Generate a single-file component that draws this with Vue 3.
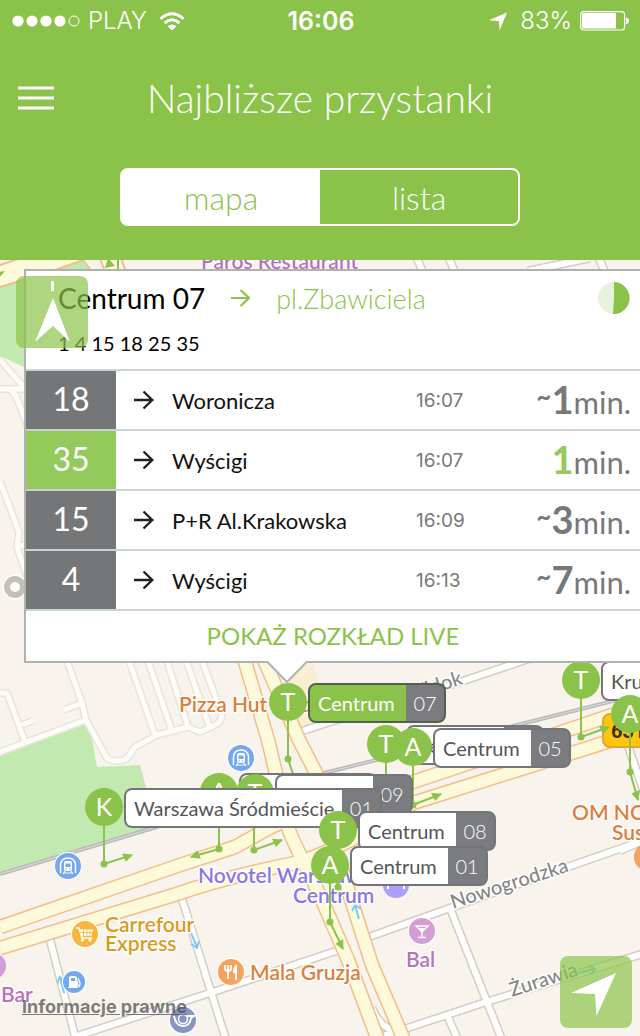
<script setup>
import { ref } from 'vue'

const view = ref('mapa')

const departures = [
  { line: '18', live: false, dest: 'Woronicza', time: '16:07', approx: '~', min: '1' },
  { line: '35', live: true, dest: 'Wyścigi', time: '16:07', approx: '', min: '1' },
  { line: '15', live: false, dest: 'P+R Al.Krakowska', time: '16:09', approx: '~', min: '3' },
  { line: '4', live: false, dest: 'Wyścigi', time: '16:13', approx: '~', min: '7' },
]

/* x / y: centre of the round marker on the map canvas */
const stops = [
  { kind: 'T', x: 581, y: 420, name: 'Krucza', no: '02' },
  { kind: 'A', x: 630, y: 454 },
  { kind: 'T', x: 288, y: 442, name: 'Centrum', no: '07', active: true },
  { kind: 'T', x: 386, y: 484, name: 'Centrum', no: '06' },
  { kind: 'A', x: 413, y: 487, name: 'Centrum', no: '05' },
  { kind: 'A', x: 219, y: 532, name: 'Centrum', no: '10' },
  { kind: 'T', x: 255, y: 533, name: 'Centrum', no: '09' },
  { kind: 'K', x: 104, y: 547, name: 'Warszawa Śródmieście', no: '01' },
  { kind: 'T', x: 338, y: 570, name: 'Centrum', no: '08' },
  { kind: 'A', x: 330, y: 605, name: 'Centrum', no: '01' },
]

/* stem start, dot, and arrow tip for every stop */
const stems = [
  [288, 702, 288, 759, 297, 786],
  [104, 806, 104, 864, 132, 855],
  [219, 791, 219, 849, 191, 857],
  [254, 791, 254, 850, 282, 840],
  [330, 864, 330, 922, 343, 949],
  [338, 829, 338, 887, 334, 870],
  [386, 743, 386, 790, 386, 775],
  [413, 746, 413, 805, 441, 794],
  [581, 680, 581, 737, 609, 727],
  [630, 714, 630, 772, 638, 800],
]

const paths = {
  lane: [
    'M65 655 L82 703 L86 720 L107 758 Q109 761 120 761 Q127 760 130 754 L135 747 L157 735 L188 727 L200 732 L217 724 Q223 720 221 712 L200 655',
    'M64 710 L82 703', 'M0 752 L86 720', 'M0 693 L7 693 L25 742', 'M21 725 L33 721',
    'M127 655 L155 735', 'M146 655 L172 731', 'M165 655 L188 727', 'M184 655 L210 728',
    'M0 360 L30 394', 'M0 389 L30 389', 'M10 389 L16 396 L30 432',
    'M0 481 L19 532 L17 547 L30 585', 'M17 547 L30 543',
  ],
  street: [
    'M178 886 L226 1040', 'M48 932 L76 1040', 'M74 1037 L213 992 L345 948',
    'M366 938 L450 908 L645 840', 'M450 908 L502 1040', 'M380 1037 L447 1015 L483 1003 L645 953',
    'M447 1015 L458 1040', 'M372 1008 Q380 1028 396 1031', 'M290 735 L330 722 L463 681 L540 655',
    'M528 271 L590 258', 'M417 258 L424 275', 'M449 258 L456 275', 'M599 258 L606 275',
    'M626 740 L645 795', 'M620 851 L645 840',
  ],
  avenue: [
    'M0 927 L180 865 L235 847 L262 832 Q300 810 413 782 L645 704',
    'M0 948 L177 894 Q225 877 300 862 Q350 845 413 803 L645 730',
    'M243 655 L268 740 L280 790 Q281 820 303 860 L322 900 L348 960 L378 1040',
    'M262 655 L299 740 L316 773 L330 830 L345 880 L356 915 L372 965 L404 1040',
  ],
}
</script>

<template>
  <main class="app">
    <header class="top">
      <div class="status">
        <div class="status-side">
          <svg width="68" height="12" viewBox="0 0 68 12" aria-hidden="true">
            <g fill="#fff">
              <circle cx="6" cy="6" r="5.6" /><circle cx="20" cy="6" r="5.6" />
              <circle cx="34" cy="6" r="5.6" /><circle cx="48" cy="6" r="5.6" />
            </g>
            <circle cx="62" cy="6" r="5" fill="none" stroke="#fff" />
          </svg>
          <span class="carrier">PLAY</span>
          <svg width="26" height="19" viewBox="0 0 26 19" fill="none" stroke="#fff" stroke-width="3" aria-hidden="true">
            <path d="M1.5 6.8 Q13 -3.4 24.5 6.8" />
            <path d="M5.6 11 Q13 4.6 20.4 11" />
            <path d="M13 18.5 L8.6 14.2 Q13 10.8 17.4 14.2 Z" fill="#fff" stroke="none" />
          </svg>
        </div>
        <strong class="clock">16:06</strong>
        <div class="status-side end">
          <svg width="20" height="19" viewBox="0 0 20 19" aria-hidden="true"><path d="M19 0.5 L11.5 18.5 L11 9.2 L1 8.2 Z" fill="#fff" /></svg>
          <span class="percent">83%</span>
          <svg width="50" height="20" viewBox="0 0 50 20" aria-hidden="true">
            <rect x="0.6" y="0.6" width="44" height="18.4" rx="3" fill="none" stroke="#fff" stroke-width="1.2" />
            <rect x="2" y="2" width="34" height="15.6" rx="1" fill="#fff" />
            <path d="M46 6.4 Q49 7 49 9.8 Q49 12.6 46 13.2 Z" fill="#fff" />
          </svg>
        </div>
      </div>
      <div class="bar">
        <button class="menu" type="button" aria-label="Menu">
          <svg width="36" height="24" viewBox="0 0 36 24"><path d="M0 2 H36 M0 12 H36 M0 22 H36" stroke="#fff" stroke-width="3" /></svg>
        </button>
        <h1>Najbliższe przystanki</h1>
      </div>
      <div class="segment">
        <button type="button" :class="{ on: view === 'mapa' }" @click="view = 'mapa'">mapa</button>
        <button type="button" :class="{ on: view === 'lista' }" @click="view = 'lista'">lista</button>
      </div>
    </header>

    <section class="map">
      <svg class="ground" aria-hidden="true">
        <defs>
          <g id="metro">
            <circle r="14" fill="#fff" /><circle r="13" fill="#73a7ef" />
            <path d="M-7.5 7 V-1 Q-7 -8 0 -8 Q7 -8 7.5 -1 V7" fill="none" stroke="#fff" stroke-width="1.5" />
            <rect x="-4" y="-5" width="8" height="10" rx="2" fill="#fff" />
            <rect x="-2.5" y="-2.5" width="5" height="3.5" fill="#73a7ef" />
            <path d="M-2.5 3 H-1 M1 3 H2.5" stroke="#73a7ef" /><path d="M-3 5 L-5 8 M3 5 L5 8 M-4 7 H4" stroke="#fff" stroke-width="1.2" />
          </g>
        </defs>
        <g transform="translate(0 -260)">
          <path class="park" d="M0 756 L86 723 L91 733 L97 767 L140 765 L146 787 L152 828 L0 874 Z" />
          <path class="park" d="M0 285 L30 276 L82 260 L95 275 L30 370 L5 358 L0 357 Z" />
          <path d="M298 655 H310 L326 705 L320 722 L296 728 L284 700 Z" fill="#f9edd3" />
          <path d="M0 264 L14 260 H81 L45 273 L0 287 Z M101 258 L106 275 H126 L122 258 Z" fill="#fcfadb" />
          <path d="M0 265 L18 259 M0 287 L50 272 L83 260 L92 272 M100 258 L106 275 M121 258 L127 275" fill="none" stroke="#f4bd88" stroke-width="2" />
          <g class="line">
            <path v-for="d in paths.lane" :key="d" :d="d" stroke="#e9e4da" stroke-width="8" />
            <path v-for="d in paths.lane" :key="'f' + d" :d="d" stroke="#fefcf8" stroke-width="5" />
            <path v-for="d in paths.street" :key="d" :d="d" stroke="#d6cec3" stroke-width="9" />
            <path v-for="d in paths.street" :key="'f' + d" :d="d" stroke="#fff" stroke-width="6" />
            <path d="M0 874 L150 829 L320 774 L517 725 L645 693" stroke="#b9b9b9" stroke-width="4" />
            <path d="M0 874 L150 829 L320 774 L517 725 L645 693" stroke="#dedede" stroke-width="1" />
            <path v-for="d in paths.avenue" :key="d" :d="d" stroke="#f4bd88" stroke-width="15" />
            <path v-for="d in paths.avenue" :key="'f' + d" :d="d" stroke="#fcfadb" stroke-width="12" />
          </g>
          <circle cx="15" cy="587" r="12.5" fill="#fff" /><circle cx="15" cy="587" r="11" fill="#c3c0b9" /><circle cx="15" cy="587" r="5" fill="#fff" />

          <g fill="none" stroke="#7cc9fa" stroke-width="2">
            <path d="M191 933 L197 947 M191 944 L197 948 L199 941" />
            <path d="M64 993 L60 977 M57 983 L60 977 L65 982" />
            <path d="M359 919 L355 905 M352 911 L355 905 L361 909" />
            <path d="M578 973 L594 969 M589 966 L595 969 L591 974" />
          </g>

          <use href="#metro" x="241" y="758" />
          <use href="#metro" x="68" y="866" />
          <g transform="translate(85 934)">
            <circle r="14" fill="#fff" /><circle r="13" fill="#f9b53c" />
            <path d="M-9 -6 H-6 L-3 4 H7" fill="none" stroke="#fff" stroke-width="1.5" />
            <path d="M-5.5 -4.5 H8 L6.5 2 H-3.5 Z" fill="#fff" /><path d="M-5 -1.5 H8 M-1.5 -4 V2 M2 -4 V2 M5 -4 V2" stroke="#f9b53c" stroke-width="0.8" />
            <circle cx="-2.5" cy="6" r="1.6" fill="#fff" /><circle cx="5" cy="6" r="1.6" fill="#fff" />
          </g>
          <g transform="translate(74 982)">
            <circle r="12" fill="#fff" /><circle r="11" fill="#73a7ef" />
            <path d="M-5 5 V-4 Q-5 -6 -3 -6 H1 Q3 -6 3 -4 V5 Z" fill="#fff" /><rect x="-3" y="-4" width="4" height="3" fill="#73a7ef" />
            <path d="M3 -1 L4 4 Q6 6 6 1 L4 -4" fill="none" stroke="#fff" stroke-width="1.3" /><path d="M-6 5.5 H4" stroke="#fff" />
          </g>
          <g transform="translate(231 972)">
            <circle r="14" fill="#fff" /><circle r="13" fill="#f6a25f" />
            <path d="M-6 -7 V-3 Q-6 -1 -3 -1 Q0 -1 0 -3 V-7 M-3 -7 V7" fill="none" stroke="#fff" stroke-width="1.8" />
            <path d="M6 -8 V8 H4 V1 H2 Q2 -6 6 -8 Z" fill="#fff" />
          </g>
          <g transform="translate(183 1020)">
            <circle r="14" fill="#fff" /><circle r="13" fill="#8796c0" />
            <circle r="4.5" cy="-1" fill="none" stroke="#fff" stroke-width="1.5" />
            <path d="M-9 -4 Q-7 6 0 6 Q7 6 8 -2 L11 -4 H4" fill="none" stroke="#fff" stroke-width="2" />
          </g>
          <g transform="translate(422 931)">
            <circle r="14" fill="#fff" /><circle r="13" fill="#d39dd5" />
            <path d="M-6 -5 H6 L0 1 Z M0 0 V6 M-4 6.5 H4" fill="none" stroke="#fff" stroke-width="1.4" /><path d="M-3 -3 H3 L0 1 Z" fill="#fff" />
          </g>
          <g transform="translate(396 885)">
            <circle r="13" fill="#ae9ffc" /><path d="M-8 4 V0 H8 V4" fill="none" stroke="#fff" stroke-width="2" />
          </g>
          <circle cx="-7" cy="966" r="13" fill="#d39dd5" /><circle cx="648" cy="857" r="14" fill="#f6a25f" />

          <g class="poi">
            <text x="201" y="269" fill="#b871bd">Paros Restaurant</text>
            <text x="179" y="712" fill="#dd7e3b">Pizza Hut</text>
            <text x="300" y="712" fill="#dd7e3b">d</text>
            <text x="572" y="820" fill="#dd7e3b">OM NOM</text>
            <text x="612" y="840" fill="#dd7e3b">Sushi</text>
            <text x="198" y="883" fill="#8878e4">Novotel Warszawa</text>
            <text x="293" y="903" fill="#8878e4">Centrum</text>
            <text x="105" y="932" fill="#d99a1f">Carrefour</text>
            <text x="105" y="951" fill="#d99a1f">Express</text>
            <text x="250" y="980" fill="#dd7e3b">Mala Gruzja</text>
            <text x="406" y="967" fill="#b871bd">Bal</text>
            <text x="1" y="1002" fill="#b871bd">Bar</text>
          </g>
          <g class="road">
            <text transform="translate(453 909) rotate(-18)">Nowogrodzka</text>
            <text transform="translate(512 997) rotate(-18)">Żurawia</text>
            <text transform="translate(408 702) rotate(-18)">Widok</text>
          </g>
          <g>
            <rect x="603" y="714" width="60" height="33" rx="7" fill="#ffc60a" stroke="#e5a13c" stroke-width="2" />
            <text class="shield" x="611" y="738">631</text>
          </g>

          <g stroke="#8bc34a" fill="#8bc34a" stroke-width="2">
            <g v-for="s in stems" :key="s.join()">
              <path :d="`M${s[0]} ${s[1]} L${s[2]} ${s[3]} L${s[4]} ${s[5]}`" fill="none" />
              <circle :cx="s[2]" :cy="s[3]" r="2.5" />
              <path
                stroke="none"
                d="M1 0 L-9 -4.5 L-8 4.5 Z"
                :transform="`translate(${s[4]} ${s[5]}) rotate(${(Math.atan2(s[5] - s[3], s[4] - s[2]) * 180) / Math.PI})`"
              />
            </g>
            <path d="M118 258 V275" /><path d="M108 258 L115 266 L105 268 Z M-2 272 L5 271 L-2 279 Z" stroke="none" />
          </g>
        </g>
      </svg>

      <button
        v-for="s in stops"
        :key="`${s.kind}${s.x}`"
        type="button"
        class="stop"
        :class="{ active: s.active }"
        :style="{ left: s.x + 'px', top: s.y + 'px' }"
      >
        <span class="disc">{{ s.kind }}</span>
        <span v-if="s.name" class="tag"><span class="name">{{ s.name }}</span><span class="no">{{ s.no }}</span></span>
      </button>

      <article class="card">
        <div class="card-head">
          <div class="route">
            <h2>Centrum 07</h2>
            <svg width="20" height="18" viewBox="0 0 20 18" fill="none" stroke="#8bc34a" stroke-width="2.2" aria-hidden="true"><path d="M0 9 H18 M9.5 1 L18 9 L9.5 17" /></svg>
            <span class="toward">pl.Zbawiciela</span>
            <svg class="pie" width="32" height="32" viewBox="0 0 32 32" aria-hidden="true">
              <circle cx="16" cy="16" r="16" fill="#e6f2da" /><path d="M16 0 A16 16 0 1 1 15 32 L16 16 Z" fill="#8bc34a" />
            </svg>
          </div>
          <p class="lines">1 4 15 18 25 35</p>
        </div>
        <table>
          <tbody>
            <tr v-for="d in departures" :key="d.line">
              <th scope="row" :class="{ live: d.live }">{{ d.line }}</th>
              <td class="arrow">
                <svg width="20" height="20" viewBox="0 0 20 20" fill="none" stroke="#231f20" stroke-width="2.4" aria-hidden="true"><path d="M0 10 H18 M9.5 1.5 L18.3 10 L9.5 18.5" /></svg>
              </td>
              <td class="dest">{{ d.dest }}</td>
              <td class="time">{{ d.time }}</td>
              <td class="wait" :class="{ live: d.live }"><span class="approx">{{ d.approx }}</span><b>{{ d.min }}</b>min.</td>
            </tr>
          </tbody>
        </table>
        <button class="more" type="button">POKAŻ ROZKŁAD LIVE</button>
        <svg class="tip" width="42" height="23" viewBox="0 0 42 23" aria-hidden="true">
          <path d="M0 0 H42 V2 H40 L21 21 L2 2 H0 Z" fill="#fff" /><path d="M0 1 H1.5 L21 21 L40.5 1 H42" fill="none" stroke="#b1b1b1" stroke-width="2" />
        </svg>
      </article>

      <button class="float compass" type="button" aria-label="Północ">
        <svg width="72" height="72" viewBox="0 0 72 72" fill="#fff"><rect x="35" y="5" width="3" height="10" /><path d="M37 22 L54 66 L37 50 L19 66 Z" /></svg>
      </button>
      <button class="float locate" type="button" aria-label="Moja lokalizacja">
        <svg width="72" height="72" viewBox="0 0 72 72" fill="#fff"><path d="M56 17 L36.5 60 L35 38 L11 37 Z" /></svg>
      </button>
      <a class="legal" href="#prawne">Informacje prawne</a>
    </section>
  </main>
</template>

<style>
body {
  margin: 0;
}
</style>

<style scoped>
.app {
  min-height: 100vh;
  display: flex;
  flex-direction: column;
  overflow: hidden;
  font-family: Lato, "Noto Sans", sans-serif;
}
button {
  padding: 0;
  border: 0;
  background: none;
  font: inherit;
  color: inherit;
  cursor: pointer;
}
svg {
  display: block;
}
.top {
  padding-bottom: 34px;
  background: #8bc34a;
  color: #fff;
  display: flex;
  flex-direction: column;
}
.status {
  height: 42px;
  padding: 0 10px 0 12px;
  display: grid;
  grid-template-columns: 1fr auto 1fr;
  align-items: center;
  font: 25px/42px Inter, sans-serif;
}
.status-side {
  display: flex;
  align-items: center;
  gap: 8px;
}
.status-side.end {
  justify-content: flex-end;
}
.carrier {
  font-size: 24px;
  font-weight: 300;
  margin-right: 4px;
}
.percent {
  font-size: 24px;
  font-weight: 300;
  margin-left: 4px;
}
.clock {
  font-weight: 600;
}
.bar {
  margin: 32px 0 46px;
  display: grid;
  grid-template-columns: 72px 1fr 72px;
  align-items: center;
}
.menu {
  justify-self: center;
}
h1 {
  margin: 0;
  text-align: center;
  font-size: 39px;
  line-height: 48px;
  font-weight: 300;
}
.segment {
  align-self: center;
  box-sizing: border-box;
  width: 400px;
  max-width: 90%;
  height: 58px;
  border: 2px solid #fff;
  border-radius: 8px;
  display: flex;
}
.segment button {
  flex: 1;
  font-size: 32px;
  font-weight: 300;
}
.segment .on {
  background: #fff;
  color: #8bc34a;
  border-radius: 4px 0 0 4px;
}
.map {
  flex: 1;
  position: relative;
  background: #f8f4ed;
}
.ground {
  position: absolute;
  inset: 0;
  width: 100%;
  height: 100%;
}
.park {
  fill: #c2e9af;
}
.line path {
  fill: none;
  stroke-linejoin: round;
}
.poi text,
.road text {
  font-size: 21px;
  font-weight: 600;
  paint-order: stroke;
  stroke: #fff;
  stroke-width: 3px;
  stroke-linejoin: round;
}
.road text {
  font-size: 20px;
  fill: #858585;
  font-weight: 500;
}
.shield {
  font: 700 20px Roboto, sans-serif;
  fill: #3b3226;
}
.stop {
  position: absolute;
  display: flex;
  align-items: center;
  gap: 1px;
  margin: -19px 0 0 -19px;
  height: 40px;
  white-space: nowrap;
}
.disc {
  width: 38px;
  height: 38px;
  border-radius: 50%;
  background: #8bc34a;
  color: #fff;
  font-size: 25px;
  line-height: 36px;
  text-align: center;
  align-self: flex-start;
}
.tag {
  display: flex;
  box-sizing: border-box;
  height: 40px;
  border: 2px solid #747578;
  border-radius: 8px;
  background: #7b7c7f;
  font-size: 20px;
  line-height: 36px;
  overflow: hidden;
}
.name {
  min-width: 80px;
  padding: 0 8px;
  background: #fff;
  color: #545456;
  text-align: left;
}
.no {
  width: 38px;
  color: #fff;
  font-weight: 300;
  text-align: center;
}
.active .tag {
  border-color: #55624b;
}
.active .name {
  background: #8bc34a;
  color: #fff;
}
.card {
  position: relative;
  margin: 9px 0 0 24px;
  border: 2px solid #b1b1b1;
  border-right: 0;
  background: #fff;
}
.card-head {
  padding: 9px 10px 12px 32px;
  border-bottom: 2px solid #c9d4d7;
}
.route {
  display: flex;
  align-items: center;
  height: 36px;
}
h2 {
  margin: 0 26px 0 0;
  font-size: 28px;
  font-weight: 400;
}
.toward {
  margin-left: 25px;
  font-size: 27px;
  font-weight: 300;
  color: #8bc34a;
}
.pie {
  margin-left: auto;
}
.lines {
  margin: 14px 0 0;
  font-size: 20px;
  line-height: 27px;
}
table {
  width: 100%;
  border-collapse: separate;
  border-spacing: 0;
  table-layout: fixed;
}
th,
td {
  box-sizing: border-box;
  height: 60px;
  padding: 0;
  border-bottom: 2px solid #c9d4d7;
  text-align: left;
}
th {
  width: 90px;
  background: #757678;
  color: #fff;
  font-size: 32px;
  line-height: 40px;
  font-weight: 400;
  text-align: center;
  padding-bottom: 2px;
}
th.live {
  background: #94ca5c;
}
.arrow {
  width: 56px;
  padding-left: 18px;
}
.dest {
  font-size: 22px;
  color: #111;
}
.time {
  width: 96px;
  font: 19px Inter, sans-serif;
  color: #77787a;
}
.wait {
  width: 128px;
  padding-right: 9px;
  text-align: right;
  font-size: 31px;
  line-height: 40px;
  color: #77787a;
}
.wait b {
  font-size: 38px;
}
.approx {
  font-size: 26px;
  font-weight: 700;
  vertical-align: 8px;
  line-height: 1px;
}
.wait.live b {
  color: #94ca5c;
}
.more {
  display: block;
  width: 100%;
  height: 50px;
  padding-bottom: 2px;
  font-size: 24px;
  color: #8bc34a;
}
.tip {
  position: absolute;
  left: 240px;
  top: 100%;
}
.float {
  position: absolute;
  width: 72px;
  height: 72px;
  border-radius: 8px;
  background: rgba(139, 195, 74, 0.7);
}
.compass {
  left: 16px;
  top: 16px;
}
.locate {
  right: 8px;
  bottom: 8px;
}
.legal {
  position: absolute;
  left: 22px;
  bottom: 17px;
  font: 700 18px/24px Inter, sans-serif;
  color: rgba(70, 70, 70, 0.7);
}
</style>
